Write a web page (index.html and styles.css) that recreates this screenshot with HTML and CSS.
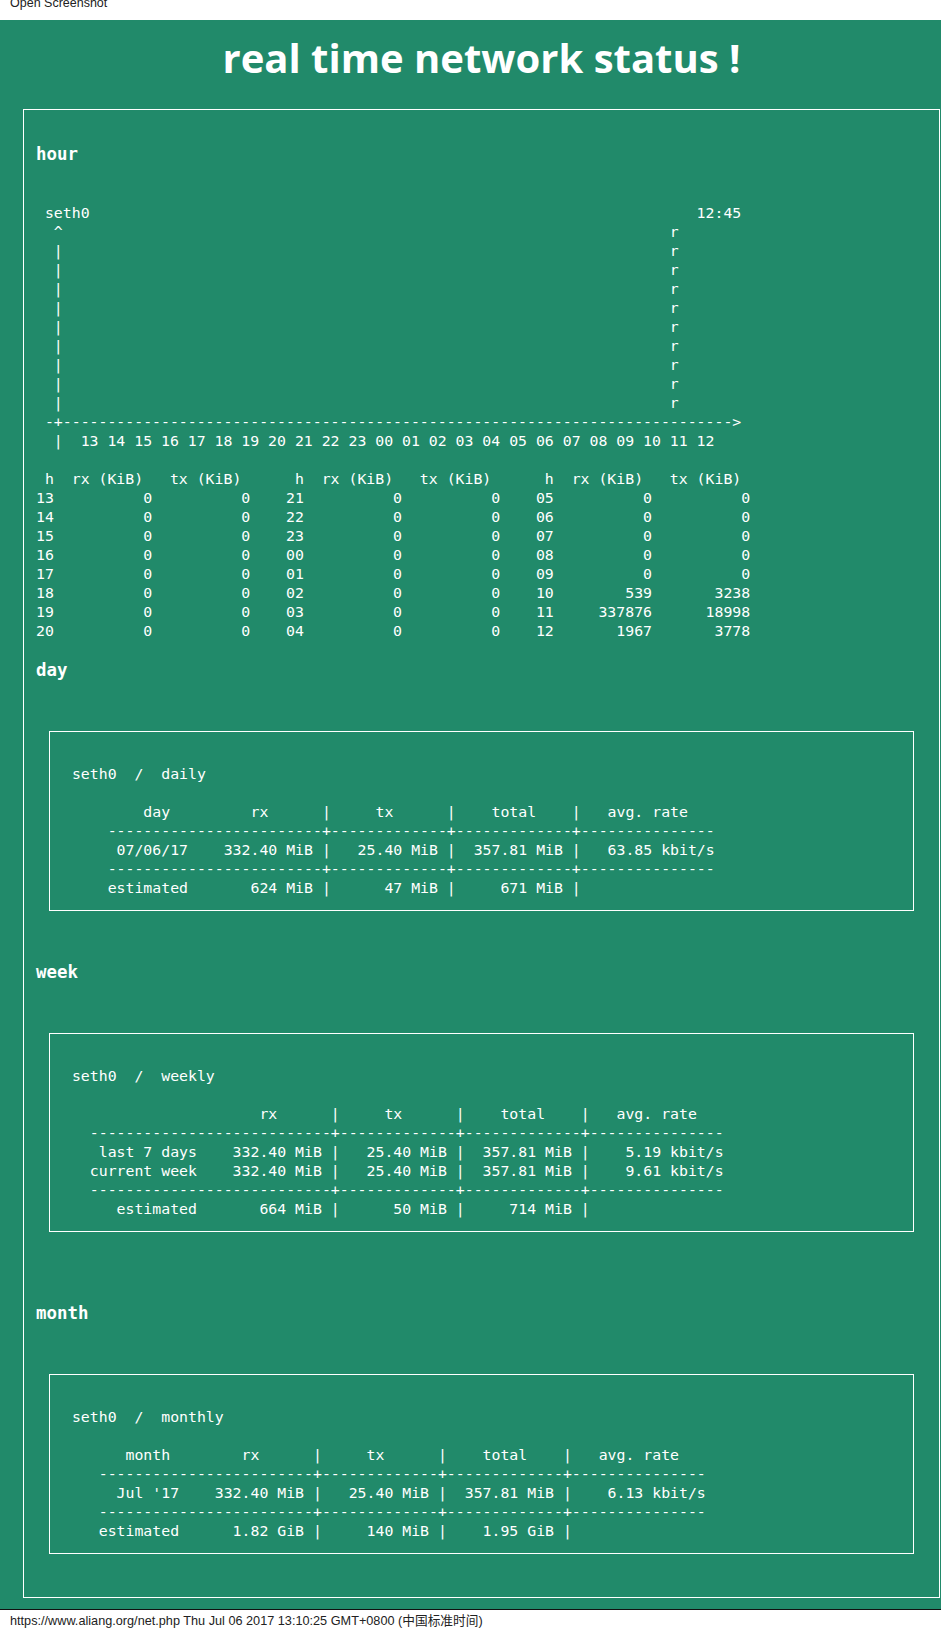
FILE: index.html
```html
<!DOCTYPE html>
<html lang="en">
<head>
<meta charset="utf-8">
<title>net status</title>
<link rel="stylesheet" href="styles.css">
</head>
<body>
<div class="topbar">Open Screenshot</div>
<main class="page">
  <h1 class="title">real time network status !</h1>
  <section class="panel">
    <h3 class="sec sec-first">hour</h3>
<pre class="graph"> seth0                                                                    12:45
  ^                                                                    r
  |                                                                    r
  |                                                                    r
  |                                                                    r
  |                                                                    r
  |                                                                    r
  |                                                                    r
  |                                                                    r
  |                                                                    r
  |                                                                    r
 -+---------------------------------------------------------------------------&gt;
  |  13 14 15 16 17 18 19 20 21 22 23 00 01 02 03 04 05 06 07 08 09 10 11 12

 h  rx (KiB)   tx (KiB)      h  rx (KiB)   tx (KiB)      h  rx (KiB)   tx (KiB)
13          0          0    21          0          0    05          0          0
14          0          0    22          0          0    06          0          0
15          0          0    23          0          0    07          0          0
16          0          0    00          0          0    08          0          0
17          0          0    01          0          0    09          0          0
18          0          0    02          0          0    10        539       3238
19          0          0    03          0          0    11     337876      18998
20          0          0    04          0          0    12       1967       3778</pre>
    <h3 class="sec sec-day">day</h3>
    <div class="box">
<pre class="report">

 seth0  /  daily

         day         rx      |     tx      |    total    |   avg. rate
     ------------------------+-------------+-------------+---------------
      07/06/17    332.40 MiB |   25.40 MiB |  357.81 MiB |   63.85 kbit/s
     ------------------------+-------------+-------------+---------------
     estimated       624 MiB |      47 MiB |     671 MiB |</pre>
    </div>
    <h3 class="sec sec-week">week</h3>
    <div class="box">
<pre class="report">

 seth0  /  weekly

                      rx      |     tx      |    total    |   avg. rate
   ---------------------------+-------------+-------------+---------------
    last 7 days    332.40 MiB |   25.40 MiB |  357.81 MiB |    5.19 kbit/s
   current week    332.40 MiB |   25.40 MiB |  357.81 MiB |    9.61 kbit/s
   ---------------------------+-------------+-------------+---------------
      estimated       664 MiB |      50 MiB |     714 MiB |</pre>
    </div>
    <h3 class="sec sec-month">month</h3>
    <div class="box">
<pre class="report">

 seth0  /  monthly

       month        rx      |     tx      |    total    |   avg. rate
    ------------------------+-------------+-------------+---------------
      Jul '17    332.40 MiB |   25.40 MiB |  357.81 MiB |    6.13 kbit/s
    ------------------------+-------------+-------------+---------------
    estimated      1.82 GiB |     140 MiB |    1.95 GiB |</pre>
    </div>
  </section>
</main>
<footer class="statusbar">https://www.aliang.org/net.php Thu Jul 06 2017 13:10:25 GMT+0800 (中国标准时间)</footer>
</body>
</html>
```
FILE: styles.css
```css
html, body {
  margin: 0;
  padding: 0;
}

body {
  background: #ffffff;
  width: 941px;
}

.topbar {
  box-sizing: border-box;
  height: 20px;
  padding-left: 10px;
  overflow: hidden;
  background: #ffffff;
  color: #222222;
  font: 12.5px/6px "Liberation Sans", Arial, sans-serif;
}

.page {
  background: #218a6a;
  color: #ffffff;
  padding: 11px 1px 11.5px 23px;
}

.title {
  margin: 0 0 24px;
  font: bold 40px/54px "Open Sans", "Liberation Sans", sans-serif;
  text-align: center;
}

.panel {
  border: 1px solid #ffffff;
  padding: 32.5px 12px 43px;
}

.sec {
  margin: 0;
  font: bold 17.4px/22px "DejaVu Sans Mono", monospace;
}

.sec-day {
  margin-top: 19px;
}

.sec-week {
  margin-top: 50px;
}

.sec-month {
  margin-top: 70px;
}

.graph,
.report {
  margin: 0;
  font: 14.83px/19px "DejaVu Sans Mono", monospace;
  white-space: pre;
}

.graph {
  margin-top: 38.3px;
}

.box {
  border: 1px solid #ffffff;
  margin: 50px 13px 0;
  padding: 13px;
}

.statusbar {
  box-sizing: border-box;
  height: 21px;
  border-top: 1px solid #111111;
  padding: 3px 0 0 10px;
  background: #ffffff;
  color: #222222;
  font: 12.7px/17px "Liberation Sans", "Noto Sans CJK SC", sans-serif;
  white-space: nowrap;
  overflow: hidden;
}
```
